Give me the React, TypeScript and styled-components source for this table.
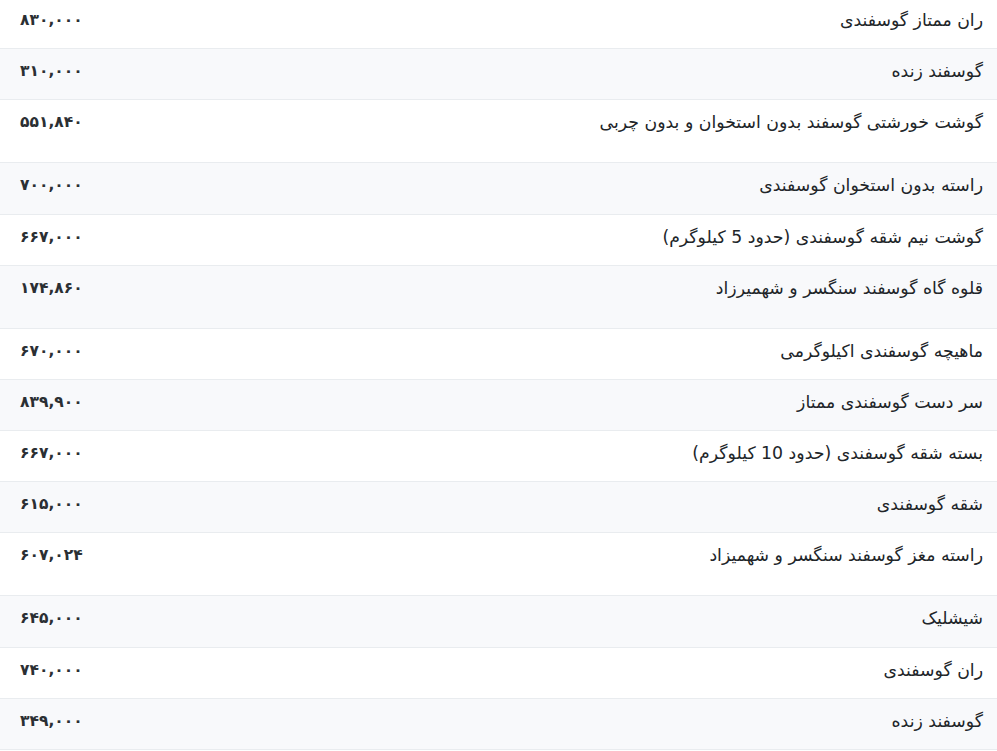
import React from 'react';
import styled, { createGlobalStyle } from 'styled-components';

const GlobalStyle = createGlobalStyle`
  html, body {
    margin: 0;
    padding: 0;
    background: #ffffff;
  }
  body {
    font-family: "DejaVu Sans", "Noto Sans", sans-serif;
    color: #212529;
  }
`;

interface PriceItem {
  name: string;
  price: string;
  tall?: boolean;
}

const items: PriceItem[] = [
  { name: 'ران ممتاز گوسفندی', price: '۸۳۰,۰۰۰' },
  { name: 'گوسفند زنده', price: '۳۱۰,۰۰۰' },
  { name: 'گوشت خورشتی گوسفند بدون استخوان و بدون چربی', price: '۵۵۱,۸۴۰', tall: true },
  { name: 'راسته بدون استخوان گوسفندی', price: '۷۰۰,۰۰۰' },
  { name: 'گوشت نیم شقه گوسفندی (حدود 5 کیلوگرم)', price: '۶۶۷,۰۰۰' },
  { name: 'قلوه گاه گوسفند سنگسر و شهمیرزاد', price: '۱۷۴,۸۶۰', tall: true },
  { name: 'ماهیچه گوسفندی اکیلوگرمی', price: '۶۷۰,۰۰۰' },
  { name: 'سر دست گوسفندی ممتاز', price: '۸۳۹,۹۰۰' },
  { name: 'بسته شقه گوسفندی (حدود 10 کیلوگرم)', price: '۶۶۷,۰۰۰' },
  { name: 'شقه گوسفندی', price: '۶۱۵,۰۰۰' },
  { name: 'راسته مغز گوسفند سنگسر و شهمیزاد', price: '۶۰۷,۰۲۴', tall: true },
  { name: 'شیشلیک', price: '۶۴۵,۰۰۰' },
  { name: 'ران گوسفندی', price: '۷۴۰,۰۰۰' },
  { name: 'گوسفند زنده', price: '۳۴۹,۰۰۰' },
];

// Styled Components
const Table = styled.div`
  display: flex;
  flex-direction: column;
  margin-top: -2px;
  width: 997px;
`;

const Row = styled.div<{ $striped: boolean; $tall: boolean }>`
  display: grid;
  grid-template-columns: 1fr 260px;
  direction: rtl;
  height: ${({ $tall }) => ($tall ? '62.1px' : '50.15px')};
  border-bottom: 1px solid #e9ecef;
  background-color: ${({ $striped }) => ($striped ? '#f8f9fb' : '#ffffff')};
`;

const NameCell = styled.div`
  padding: 9px 14px 0 0;
  font-size: 17.3px;
  line-height: 26px;
  text-align: right;
  color: #212529;
`;

const PriceCell = styled.div`
  direction: ltr;
  padding: 9px 0 0 20px;
  font-size: 15.5px;
  line-height: 26px;
  font-weight: 600;
  text-align: left;
  color: #2b2f33;
`;

export default function App() {
  return (
    <>
      <GlobalStyle />
      <Table>
        {items.map((item, i) => (
          <Row key={i} $striped={i % 2 === 1} $tall={!!item.tall}>
            <NameCell>{item.name}</NameCell>
            <PriceCell>{item.price}</PriceCell>
          </Row>
        ))}
      </Table>
    </>
  );
}
